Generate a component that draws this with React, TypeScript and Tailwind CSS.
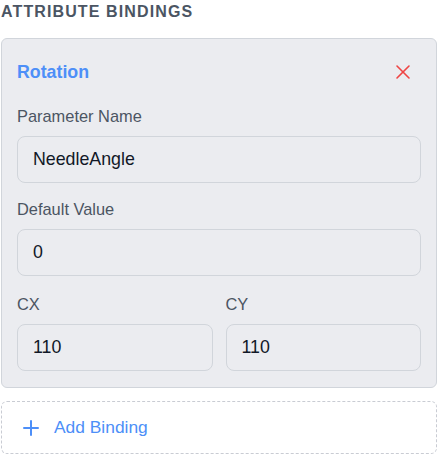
import React from "react";

function XIcon() {
  return (
    <svg width="24" height="24" viewBox="0 0 24 24" fill="none" stroke="currentColor" strokeWidth="1.6" strokeLinecap="round">
      <path d="M18 6 6 18" />
      <path d="m6 6 12 12" />
    </svg>
  );
}

function PlusIcon() {
  return (
    <svg width="24" height="24" viewBox="0 0 24 24" fill="none" stroke="currentColor" strokeWidth="2" strokeLinecap="round">
      <path d="M5 12h14" />
      <path d="M12 5v14" />
    </svg>
  );
}

function Field({ label, value }: { label: string; value: string }) {
  return (
    <div className="flex flex-col">
      <div className="text-[16.4px] leading-5 text-[#4b5563] mb-[10px]">{label}</div>
      <div className="h-[47px] rounded-lg border border-[#d1d5db] bg-[#ebecf0] flex items-center px-[15px] text-[17.8px] text-[#111827]">
        {value}
      </div>
    </div>
  );
}

export default function App() {
  return (
    <div className="w-[438px] h-[455px] bg-white pl-px pr-px" style={{ fontFamily: '"Liberation Sans", Arial, sans-serif' }}>
      <div className="h-[38px] pt-[3px] text-[16px] leading-[18px] font-bold uppercase tracking-[0.07em] text-[#4b5563]">
        Attribute Bindings
      </div>
      <div className="rounded-md border border-[#d1d5db] bg-[#ebecf0] px-[15px] pt-[21px] pb-[16px] flex flex-col">
        <div className="flex items-center justify-between h-6 mb-[22px]">
          <span className="text-[17.8px] font-bold text-[#4d8ff8]">Rotation</span>
          <span className="text-[#ef4444] mr-[6px]"><XIcon /></span>
        </div>
        <div className="flex flex-col">
          <Field label="Parameter Name" value="NeedleAngle" />
          <div className="h-4" />
          <Field label="Default Value" value="0" />
          <div className="h-[18px]" />
          <div className="grid grid-cols-2 gap-[13px]">
            <Field label="CX" value="110" />
            <Field label="CY" value="110" />
          </div>
        </div>
      </div>
      <div className="mt-[13px] h-[53px] rounded-md border border-dashed border-[#c9ccd3] flex items-center pl-[17px] gap-[11px] text-[#4d8ff8]">
        <PlusIcon />
        <span className="text-[17.4px]">Add Binding</span>
      </div>
    </div>
  );
}
